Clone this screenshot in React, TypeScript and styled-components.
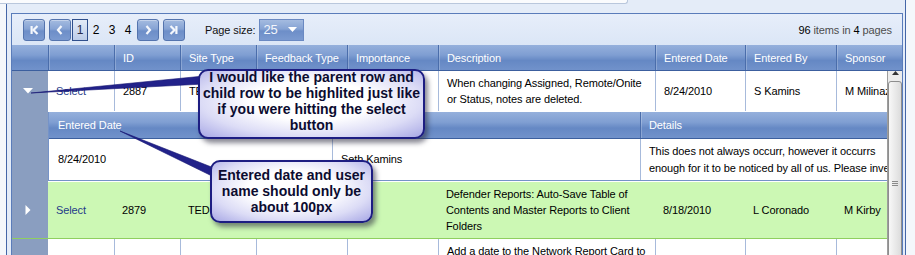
import React from 'react';
import styled, { createGlobalStyle } from 'styled-components';

const GlobalStyle = createGlobalStyle`
  html, body {
    margin: 0;
    padding: 0;
    background: #f4f7fb;
  }
  body {
    font-family: "Liberation Sans", Arial, sans-serif;
    font-size: 11px;
    letter-spacing: -0.1px;
    color: #000;
  }
  * {
    box-sizing: border-box;
  }
`;

const COLS = '36px 66px 66px 76px 91px 91px 217px 90px 91px 66px';

const headBg = `linear-gradient(to bottom, #95b0dc 0%, #7f9ed2 40%, #6588c4 62%, #7192cb 100%)`;
const buttonBg = `linear-gradient(to bottom, #a4bbe0 0%, #86a3d4 45%, #6d8ec8 55%, #7b9ad0 100%)`;

const Page = styled.div`
  position: relative;
  width: 915px;
  height: 255px;
  overflow: hidden;
`;

const Frame = styled.div`
  box-sizing: content-box;
  margin-left: 6px;
  width: 892px;
  height: 255px;
  padding: 0 2px 0 4px;
  border-left: 1px solid #4466a8;
  border-right: 1px solid #4466a8;
  background: #e4ecf8;
`;

const TopEdge = styled.div`
  margin-left: -11px;
  width: 628px;
  height: 4px;
  background: #fafbfd;
  border-bottom: 1px solid #b9c7dc;
  border-right: 1px solid #b9c7dc;
  border-bottom-right-radius: 3px;
`;

const Grid = styled.div`
  margin-top: 9px;
  border: 1px solid #5a7cba;
  background: #fff;
`;

const Pager = styled.div`
  display: flex;
  align-items: center;
  height: 31px;
  padding: 0 10px 0 11px;
  background: linear-gradient(to bottom, #e7eefa, #dbe6f6);
`;

const NavButton = styled.div<{ $ml: number }>`
  display: flex;
  align-items: center;
  justify-content: center;
  width: 22px;
  height: 22px;
  margin-left: ${p => p.$ml}px;
  border: 1px solid #5474ae;
  border-radius: 3px;
  background: ${buttonBg};
  box-shadow: inset 0 1px 0 rgba(255, 255, 255, 0.35);
`;

const Numbers = styled.div`
  display: flex;
  margin-left: 1px;
`;

const PageNum = styled.div<{ $current?: boolean }>`
  display: flex;
  align-items: center;
  justify-content: center;
  width: 16px;
  height: 22px;
  font-size: 12px;
  letter-spacing: 0;
  color: ${p => (p.$current ? '#2a2a4a' : '#000')};
  border: ${p => (p.$current ? '1px solid #2f4f8c' : '1px solid transparent')};
  background: ${p => (p.$current ? 'linear-gradient(to bottom, #e3ebf7, #bccce8)' : 'none')};
`;

const SizeLabel = styled.span`
  margin-left: 20px;
  color: #111;
`;

const SizeSelect = styled.div`
  display: flex;
  align-items: center;
  justify-content: space-between;
  width: 45px;
  height: 22px;
  margin-left: 4px;
  padding: 0 6px 0 3px;
  border: 1px solid #6a89c2;
  background: ${buttonBg};
  color: #f3f6fc;
  font-size: 13px;
  letter-spacing: 0;
`;

const PagerInfo = styled.div`
  margin-left: auto;
  color: #4d4d4d;
`;

const Strong = styled.span`
  color: #000;
`;

const HeaderRow = styled.div`
  display: grid;
  grid-template-columns: ${COLS};
  height: 26px;
  background: ${headBg};
  border-bottom: 1px solid #3c5f9e;
`;

const HeadCell = styled.div<{ $line?: boolean }>`
  display: flex;
  align-items: center;
  padding-left: 8px;
  color: #fff;
  white-space: nowrap;
  overflow: hidden;
  border-left: ${p => (p.$line ? '1px solid #4a6dab' : 'none')};
  box-shadow: ${p => (p.$line ? 'inset 1px 0 0 rgba(255,255,255,0.22)' : 'none')};
`;

const DataArea = styled.div`
  display: flex;
  height: 190px;
`;

const Viewport = styled.div`
  flex: 1;
  min-width: 0;
  overflow: hidden;
`;

const Rows = styled.div`
  width: 890px;
`;

const Row = styled.div<{ $selected?: boolean }>`
  display: grid;
  grid-template-columns: ${COLS};
  background: ${p => (p.$selected ? '#ccf8b4' : '#fff')};
  border-bottom: ${p => (p.$selected ? '1px solid #8fcf5f' : 'none')};
`;

const ExpandCell = styled.div`
  display: flex;
  align-items: center;
  justify-content: center;
  padding-right: 4px;
  background: #8a9ec0;
`;

const Cell = styled.div<{ $line?: boolean }>`
  display: flex;
  align-items: center;
  padding: 4px 8px;
  line-height: 16px;
  white-space: nowrap;
  overflow: hidden;
  border-left: ${p => (p.$line ? '1px solid #a7badb' : 'none')};
`;

const SelectLink = styled.span`
  color: #1f3c88;
`;

const DetailRow = styled.div`
  display: grid;
  grid-template-columns: 36px 1fr;
`;

const DetailHolder = styled.div`
  padding: 1px 0;
`;

const ChildTable = styled.div`
  border-left: 1px solid #7593c8;
  border-bottom: 1px solid #7593c8;
`;

const ChildHeader = styled.div`
  display: grid;
  grid-template-columns: 283px 308px 1fr;
  height: 27px;
  background: ${headBg};
  border-bottom: 1px solid #3c5f9e;
`;

const ChildHeadCell = styled(HeadCell)`
  padding-left: ${p => (p.$line ? 8 : 9)}px;
`;

const ChildBody = styled.div`
  display: grid;
  grid-template-columns: 283px 308px 1fr;
  height: 41px;
`;

const ChildCell = styled.div<{ $line?: boolean }>`
  display: flex;
  align-items: center;
  padding-left: ${p => (p.$line ? 8 : 9)}px;
  line-height: 17px;
  white-space: nowrap;
  overflow: hidden;
  border-left: ${p => (p.$line ? '1px solid #a7badb' : 'none')};
`;

const Scrollbar = styled.div`
  display: flex;
  flex-direction: column;
  width: 15px;
  background: #ececec;
  border-left: 1px solid #9d9d9d;
`;

const ScrollArrow = styled.div`
  display: flex;
  align-items: center;
  justify-content: center;
  height: 16px;
  padding-bottom: 4px;
`;

const ScrollThumb = styled.div`
  display: flex;
  align-items: center;
  justify-content: center;
  flex: none;
  height: 204px;
  margin-top: 2px;
  border: 1px solid #8e8e8e;
  border-radius: 3px 3px 0 0;
  background: linear-gradient(to right, #f8f8f8, #dcdcdc);
`;

const Grip = styled.div`
  position: relative;
  width: 6px;
  height: 5px;
  border-top: 1px solid #8a8a8a;
  border-bottom: 1px solid #8a8a8a;
  &::after {
    content: '';
    position: absolute;
    left: 0;
    right: 0;
    top: 1px;
    border-top: 1px solid #8a8a8a;
  }
`;

const Pointers = styled.svg`
  position: absolute;
  left: 0;
  top: 0;
  pointer-events: none;
`;

const Callout = styled.div<{ $x: number; $y: number; $w: number; $h: number; $lift: number }>`
  position: absolute;
  left: ${p => p.$x}px;
  top: ${p => p.$y}px;
  width: ${p => p.$w}px;
  height: ${p => p.$h}px;
  display: flex;
  align-items: center;
  justify-content: center;
  padding-bottom: ${p => p.$lift}px;
  border: 2px solid #1d1d82;
  border-radius: 10px;
  background: radial-gradient(ellipse at 50% 45%, #ffffff 0%, #ffffff 38%, #dcdcf6 70%, #a7a7e5 100%);
  box-shadow: 3px 4px 5px rgba(40, 40, 60, 0.55);
  text-align: center;
  font: bold 14px/16px "Liberation Sans", Arial, sans-serif;
  letter-spacing: 0;
  color: #0c0c30;
`;

const Chevron = ({ kind }: { kind: 'first' | 'prev' | 'next' | 'last' }) => {
  const pts = {
    first: '9.5,2 5.5,6 9.5,10',
    prev: '7.5,2 4,6 7.5,10',
    next: '4.5,2 8,6 4.5,10',
    last: '2.5,2 6.5,6 2.5,10',
  }[kind];
  return (
    <svg width="12" height="12" viewBox="0 0 12 12">
      {kind === 'first' && <rect x="2.5" y="2" width="2.2" height="8" fill="#f4f7fc" />}
      {kind === 'last' && <rect x="7.3" y="2" width="2.2" height="8" fill="#f4f7fc" />}
      <polyline points={pts} fill="none" stroke="#f4f7fc" strokeWidth="2.2" />
    </svg>
  );
};

const Arrow = ({ dir }: { dir: 'down' | 'right' }) =>
  dir === 'down' ? (
    <svg width="10" height="6" viewBox="0 0 10 6">
      <polygon points="0,0 10,0 5,5.5" fill="#fff" />
    </svg>
  ) : (
    <svg width="6" height="10" viewBox="0 0 6 10">
      <polygon points="0.5,0 5.5,5 0.5,10" fill="#fff" />
    </svg>
  );

type Item = {
  id: string;
  site: string;
  feedback: string;
  importance: string;
  desc: string[];
  date: string;
  by: string;
  sponsor: string;
};

const items: Item[] = [
  {
    id: '2887',
    site: 'TED',
    feedback: 'Bug',
    importance: '(1)',
    desc: ['When changing Assigned, Remote/Onite', 'or Status, notes are deleted.'],
    date: '8/24/2010',
    by: 'S Kamins',
    sponsor: 'M Milinazzo',
  },
  {
    id: '2879',
    site: 'TED',
    feedback: 'Feature',
    importance: '(2)',
    desc: ['Defender Reports: Auto-Save Table of', 'Contents and Master Reports to Client', 'Folders'],
    date: '8/18/2010',
    by: 'L Coronado',
    sponsor: 'M Kirby',
  },
  {
    id: '2871',
    site: 'TED',
    feedback: 'Feature',
    importance: '(3)',
    desc: [
      'Add a date to the Network Report Card to',
      'show when the report was last',
      'updated so users know the data',
      'is current.',
    ],
    date: '8/12/2010',
    by: 'S Kamins',
    sponsor: 'M Kirby',
  },
];

const headers = ['', '', 'ID', 'Site Type', 'Feedback Type', 'Importance', 'Description', 'Entered Date', 'Entered By', 'Sponsor'];

const ItemRow = ({ item, selected, arrow }: { item: Item; selected?: boolean; arrow?: 'down' | 'right' }) => {
  const line = !selected;
  return (
    <Row $selected={selected}>
      <ExpandCell>{arrow && <Arrow dir={arrow} />}</ExpandCell>
      <Cell>
        <SelectLink>Select</SelectLink>
      </Cell>
      <Cell $line={line}>{item.id}</Cell>
      <Cell $line={line}>{item.site}</Cell>
      <Cell $line={line}>{item.feedback}</Cell>
      <Cell $line={line}>{item.importance}</Cell>
      <Cell $line={line}>
        <span>
          {item.desc.map((l, i) => (
            <React.Fragment key={i}>
              {i > 0 && <br />}
              {l}
            </React.Fragment>
          ))}
        </span>
      </Cell>
      <Cell $line={line}>{item.date}</Cell>
      <Cell $line={line}>{item.by}</Cell>
      <Cell $line={line}>{item.sponsor}</Cell>
    </Row>
  );
};

export default function App() {
  return (
    <Page>
      <GlobalStyle />
      <Frame>
        <TopEdge />
        <Grid>
          <Pager>
            <NavButton $ml={0}>
              <Chevron kind="first" />
            </NavButton>
            <NavButton $ml={4}>
              <Chevron kind="prev" />
            </NavButton>
            <Numbers>
              <PageNum $current>1</PageNum>
              <PageNum>2</PageNum>
              <PageNum>3</PageNum>
              <PageNum>4</PageNum>
            </Numbers>
            <NavButton $ml={1}>
              <Chevron kind="next" />
            </NavButton>
            <NavButton $ml={4}>
              <Chevron kind="last" />
            </NavButton>
            <SizeLabel>Page size:</SizeLabel>
            <SizeSelect>
              <span>25</span>
              <svg width="9" height="5" viewBox="0 0 9 5">
                <polygon points="0,0 9,0 4.5,5" fill="#fff" />
              </svg>
            </SizeSelect>
            <PagerInfo>
              <Strong>96</Strong> items in <Strong>4</Strong> pages
            </PagerInfo>
          </Pager>

          <HeaderRow>
            {headers.map((h, i) => (
              <HeadCell key={i} $line={i > 0}>
                {h}
              </HeadCell>
            ))}
          </HeaderRow>

          <DataArea>
            <Viewport>
              <Rows>
                <ItemRow item={items[0]} arrow="down" />
                <DetailRow>
                  <ExpandCell />
                  <DetailHolder>
                    <ChildTable>
                      <ChildHeader>
                        <ChildHeadCell>Entered Date</ChildHeadCell>
                        <ChildHeadCell $line>Entered By</ChildHeadCell>
                        <ChildHeadCell $line>Details</ChildHeadCell>
                      </ChildHeader>
                      <ChildBody>
                        <ChildCell>8/24/2010</ChildCell>
                        <ChildCell $line>Seth Kamins</ChildCell>
                        <ChildCell $line>
                          <span>
                            This does not always occurr, however it occurrs
                            <br />
                            enough for it to be noticed by all of us. Please investigate.
                          </span>
                        </ChildCell>
                      </ChildBody>
                    </ChildTable>
                  </DetailHolder>
                </DetailRow>
                <ItemRow item={items[1]} arrow="right" selected />
                <ItemRow item={items[2]} />
              </Rows>
            </Viewport>
            <Scrollbar>
              <ScrollArrow>
                <svg width="7" height="4" viewBox="0 0 7 4">
                  <polygon points="0,4 7,4 3.5,0" fill="#333" />
                </svg>
              </ScrollArrow>
              <ScrollThumb>
                <Grip />
              </ScrollThumb>
            </Scrollbar>
          </DataArea>
        </Grid>
      </Frame>

      <Pointers width="915" height="255" viewBox="0 0 915 255">
        <polygon points="31,93 204,76 204,84" fill="#22228a" stroke="#141470" strokeWidth="0.6" />
        <polygon points="120,131 214,168 214,177" fill="#22228a" stroke="#141470" strokeWidth="0.6" />
      </Pointers>

      <Callout $x={198} $y={69} $w={227} $h={70} $lift={7}>
        I would like the parent row and
        <br />
        child row to be highlited just like
        <br />
        if you were hitting the select
        <br />
        button
      </Callout>
      <Callout $x={210} $y={160} $w={163} $h={63} $lift={2}>
        Entered date and user
        <br />
        name should only be
        <br />
        about 100px
      </Callout>
    </Page>
  );
}
